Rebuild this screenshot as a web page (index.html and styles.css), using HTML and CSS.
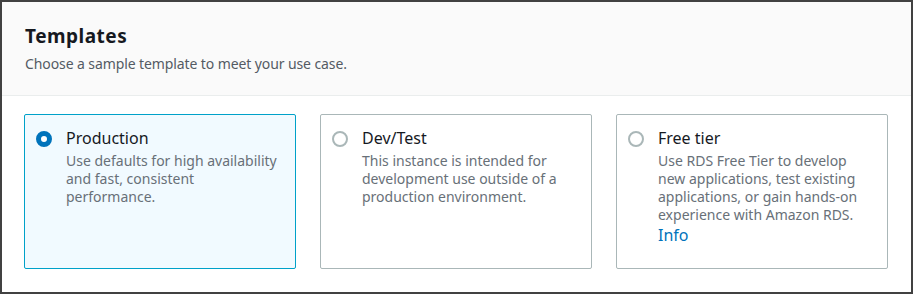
FILE: index.html
```html
<!DOCTYPE html>
<html lang="en">
<head>
    <meta charset="UTF-8">
    <title>Templates</title>
    <link rel="stylesheet" href="styles.css">
</head>
<body>
    <div class="panel">
        <div class="panel-header">
            <h2>Templates</h2>
            <p class="subtitle">Choose a sample template to meet your use case.</p>
        </div>
        <div class="panel-body">
            <div class="tiles">
                <label class="tile selected">
                    <span class="radio checked"></span>
                    <span class="tile-text">
                        <span class="tile-title">Production</span>
                        <span class="tile-desc">Use defaults for high availability and fast, consistent performance.</span>
                    </span>
                </label>
                <label class="tile">
                    <span class="radio"></span>
                    <span class="tile-text">
                        <span class="tile-title">Dev/Test</span>
                        <span class="tile-desc">This instance is intended for development use outside of a production environment.</span>
                    </span>
                </label>
                <label class="tile">
                    <span class="radio"></span>
                    <span class="tile-text">
                        <span class="tile-title">Free tier</span>
                        <span class="tile-desc">Use RDS Free Tier to develop new applications, test existing applications, or gain hands-on experience with Amazon RDS.</span>
                        <a class="info" href="#">Info</a>
                    </span>
                </label>
            </div>
        </div>
    </div>
</body>
</html>
```

FILE: styles.css
```css
* {
    box-sizing: border-box;
}
body {
    margin: 0;
    font-family: "Noto Sans", "Open Sans", sans-serif;
    background: #ffffff;
}
.panel {
    width: 913px;
    height: 294px;
    border: 2px solid #414141;
    background: #ffffff;
}
.panel-header {
    background: #fafafa;
    border-bottom: 1px solid #eaeded;
    padding: 21px 23px 0;
    height: 94px;
}
h2 {
    margin: 0;
    font-size: 19px;
    line-height: 26px;
    letter-spacing: 0.5px;
    font-weight: bold;
    color: #16191f;
}
.subtitle {
    margin: 4px 0 0;
    font-size: 14px;
    line-height: 22px;
    letter-spacing: -0.1px;
    color: #545b64;
}
.panel-body {
    padding: 18px 23px 0 22px;
}
.tiles {
    display: grid;
    grid-template-columns: repeat(3, 272px);
    gap: 24px;
}
.tile {
    display: flex;
    height: 155px;
    padding: 12px 11px;
    border: 1px solid #aab7b8;
    border-radius: 2px;
    background: #ffffff;
    cursor: pointer;
}
.tile.selected {
    border-color: #00a1c9;
    background: #f1faff;
}
.radio {
    flex: none;
    width: 16px;
    height: 16px;
    margin-top: 4px;
    margin-right: 14px;
    border: 2px solid #aab7b8;
    border-radius: 50%;
    background: #ffffff;
}
.radio.checked {
    border: 5px solid #0073bb;
}
.tile-text {
    display: flex;
    flex-direction: column;
    align-items: flex-start;
}
.tile-title {
    font-size: 16px;
    line-height: 22px;
    margin-bottom: 3px;
    color: #16191f;
}
.tile-desc {
    font-size: 14px;
    line-height: 18px;
    color: #687078;
}
.info {
    font-size: 16px;
    line-height: 22px;
    color: #0073bb;
    text-decoration: none;
}
```
